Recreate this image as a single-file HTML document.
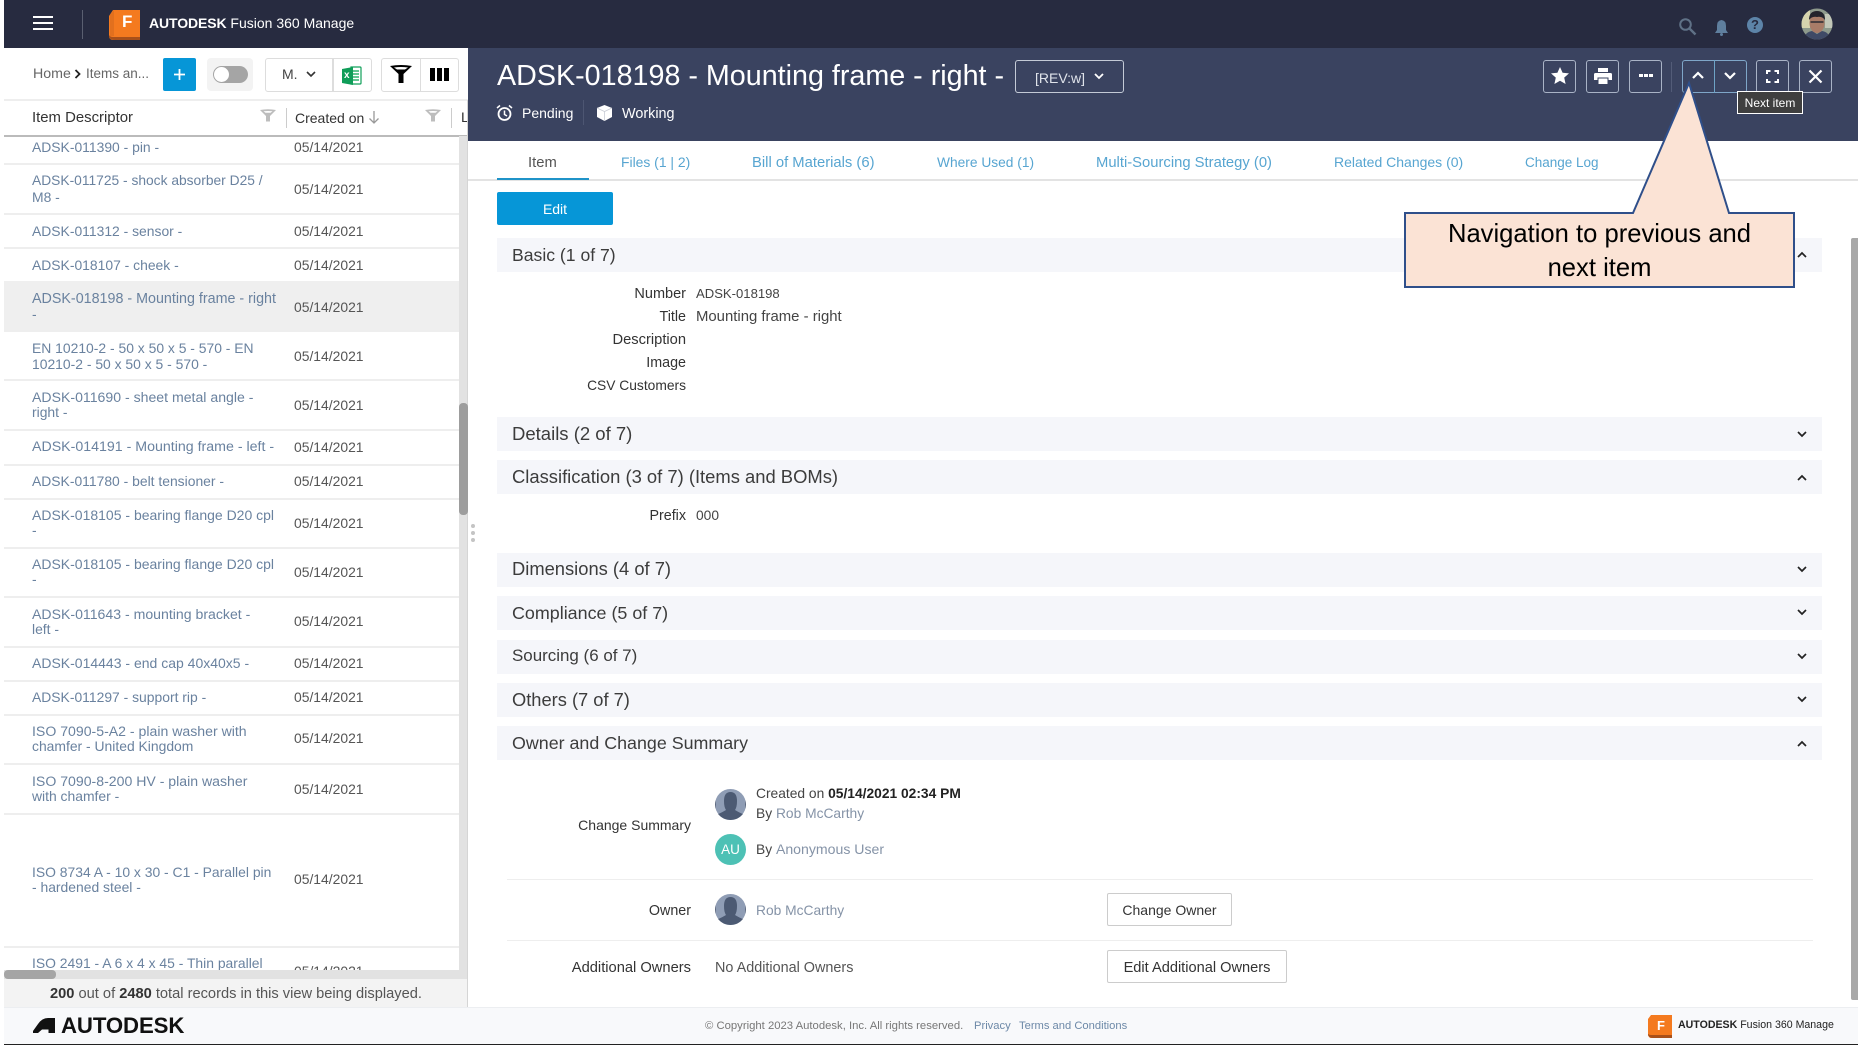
<!DOCTYPE html>
<html><head><meta charset="utf-8"><title>ADSK-018198</title>
<style>
html,body{margin:0;padding:0;background:#fff}
#p{position:relative;width:1858px;height:1045px;overflow:hidden;background:#fff;font-family:"Liberation Sans",sans-serif;font-size:14px;color:#333}
#p div,#p svg{position:absolute}
.t{white-space:nowrap;line-height:16px;height:16px}
.l{left:32px;color:#6a829f;font-size:13.9px}
.d{left:294px;color:#555;font-size:13.9px}
.s{left:4px;width:455px;height:2px;background:#eeeeee}
.h{left:497px;width:1325px;background:#f5f6fa}
.ht{left:512px;font-size:18.4px;line-height:20px;height:20px;color:#3c3c3c;white-space:nowrap}
.tab{top:155px;color:#57a5d1;font-size:14.4px}
.fl{right:1172px;font-size:14.300px;color:#333;text-align:right;margin-top:1px}
.fv{left:696px;font-size:13.8px;color:#444;margin-top:1px}
.ab{top:60px;width:31px;height:31px;border:1px solid #a9b3c6;border-radius:3px}
.lk{color:#8593a7}
</style></head><body><div id="p">

<!-- top bar -->
<div style="left:4px;top:0;width:1854px;height:48px;background:#272b40"></div>
<div style="left:33px;top:16px;width:20px;height:2px;background:#fff"></div>
<div style="left:33px;top:22px;width:20px;height:2px;background:#fff"></div>
<div style="left:33px;top:28px;width:20px;height:2px;background:#fff"></div>
<div style="left:82px;top:10px;width:1px;height:29px;background:#5a5f70"></div>
<svg style="left:109px;top:9px" width="33" height="31" viewBox="0 0 33 31"><path d="M4 1H31V31H4Q1 31 0 28V7Z" fill="#f47a1f"/><path d="M0 26Q1 28 4 28H31V31H6Q1 31 0 28Z" fill="#a8501a"/><path d="M1 6L5 1V27H1Z" fill="#e2701e"/></svg>
<div class="t" style="left:122px;top:14px;color:#fff;font-weight:bold;font-size:17px">F</div>
<div class="t" style="left:149px;top:15px;color:#fff;font-size:14px"><b style="letter-spacing:-.1px">AUTODESK</b> Fusion 360 Manage</div>
<svg style="left:1678px;top:17px" width="19" height="19" viewBox="0 0 19 19"><circle cx="7.5" cy="7.5" r="5.3" fill="none" stroke="#5f7186" stroke-width="2"/><path d="M11.5 11.5L17.5 17.5" stroke="#5f7186" stroke-width="2.4"/></svg>
<svg style="left:1714px;top:19px" width="15" height="17" viewBox="0 0 15 17"><path d="M7.5 1Q12 1.500 12 7V11L14 14H1L3 11V7Q3 1.500 7.500 1Z" fill="#5f7f9e"/><circle cx="7.500" cy="15.500" r="1.500" fill="#5f7f9e"/></svg>
<div style="left:1747px;top:17px;width:16px;height:16px;border-radius:50%;background:#5d84a8;color:#272b40;font-weight:bold;font-size:13px;line-height:16px;text-align:center">?</div>
<svg style="left:1801px;top:8px" width="32" height="32" viewBox="0 0 32 32"><defs><clipPath id="av"><circle cx="16" cy="16" r="15.500"/></clipPath></defs><g clip-path="url(#av)"><rect width="32" height="32" fill="#8e9a8c"/><rect x="0" y="0" width="9" height="20" fill="#d6d4ae"/><rect x="24" y="6" width="8" height="14" fill="#c2c7b8"/><ellipse cx="16" cy="15" rx="7.500" ry="10" fill="#a87c68"/><path d="M8 12Q8 3 16 3Q24 3 24 12Q21 8 16 9Q11 8 8 12Z" fill="#23232c"/><path d="M9.500 14H22.500" stroke="#2b2b33" stroke-width="1.500"/><path d="M2 32Q4 24 11 23L16 26L21 23Q28 24 30 32Z" fill="#3f4a66"/></g></svg>

<!-- item header -->
<div style="left:468px;top:48px;width:1390px;height:93px;background:#3a4360"></div>
<div class="t" style="left:497px;top:60px;color:#fff;font-size:28.700px;line-height:33px;height:33px">ADSK-018198 - Mounting frame - right -</div>
<div style="left:1015px;top:60px;width:107px;height:31px;border:1px solid #c3cad6;border-radius:3px"></div>
<div class="t" style="left:1035px;top:70px;color:#dfe3ea;font-size:14px">[REV:w]</div>
<svg style="left:1093px;top:72px" width="12" height="9" viewBox="0 0 12 9"><path d="M2 2L6 6L10 2" fill="none" stroke="#fff" stroke-width="1.800"/></svg>
<svg style="left:496px;top:104px" width="17" height="18" viewBox="0 0 17 18"><circle cx="8.500" cy="10" r="6" fill="none" stroke="#fff" stroke-width="1.800"/><path d="M8.500 6.500V10.500L11 12M1 4L4 1.500M16 4L13 1.500" fill="none" stroke="#fff" stroke-width="1.500"/></svg>
<div class="t" style="left:522px;top:105px;color:#fff;font-size:14px">Pending</div>
<div style="left:583px;top:100px;width:1px;height:25px;background:#4d5672"></div>
<svg style="left:596px;top:104px" width="17" height="18" viewBox="0 0 17 18"><path d="M8.500 1L16 4V13L8.500 17L1 13V4Z" fill="#fff"/><path d="M1 4L8.500 7.500L16 4M8.500 7.500V17" fill="none" stroke="#c9cdd6" stroke-width=".8"/></svg>
<div class="t" style="left:622px;top:105.500px;color:#fff;font-size:14.400px">Working</div>

<!-- action buttons -->
<div class="ab" style="left:1543px"></div>
<svg style="left:1551px;top:67px" width="18" height="17" viewBox="0 0 18 17"><path d="M9 0L11.600 5.700L18 6.400L13.200 10.600L14.600 17L9 13.700L3.400 17L4.800 10.600L0 6.400L6.400 5.700Z" fill="#fff"/></svg>
<div class="ab" style="left:1586px"></div>
<svg style="left:1594px;top:68px" width="18" height="16" viewBox="0 0 18 16"><path d="M4 0H14V4H4Z" fill="#fff"/><path d="M1.500 5H16.500Q18 5 18 6.500V12H14.500V9.500H3.500V12H0V6.500Q0 5 1.500 5Z" fill="#fff"/><path d="M4.500 10.500H13.500V16H4.500Z" fill="#fff"/></svg>
<div class="ab" style="left:1629px"></div>
<div style="left:1639px;top:74px;width:3.500px;height:3px;background:#fff"></div><div style="left:1644px;top:74px;width:3.500px;height:3px;background:#fff"></div><div style="left:1649px;top:74px;width:3.500px;height:3px;background:#fff"></div>
<div style="left:1671px;top:62px;width:1px;height:30px;background:#535c78"></div>
<div style="left:1682px;top:60px;width:63px;height:31px;border:1px solid #7fa6c8;border-radius:3px"></div>
<div style="left:1714px;top:60px;width:1px;height:33px;background:#6ea3c6"></div>
<svg style="left:1691px;top:70px" width="14" height="10" viewBox="0 0 14 10"><path d="M2 8L7 3L12 8" fill="none" stroke="#fff" stroke-width="2.200"/></svg>
<svg style="left:1723px;top:71px" width="14" height="10" viewBox="0 0 14 10"><path d="M2 2L7 7L12 2" fill="none" stroke="#fff" stroke-width="2.200"/></svg>
<div class="ab" style="left:1756px"></div>
<svg style="left:1766px;top:70px" width="13" height="13" viewBox="0 0 13 13"><path d="M1 4V1H4.500M8.500 1H12V4M12 9V12H8.500M4.500 12H1V9" fill="none" stroke="#fff" stroke-width="2"/></svg>
<div class="ab" style="left:1799px"></div>
<svg style="left:1808px;top:69px" width="15" height="15" viewBox="0 0 15 15"><path d="M1.500 1.500L13.500 13.500M13.500 1.500L1.500 13.500" stroke="#fff" stroke-width="2.200"/></svg>

<!-- tabs -->
<div style="left:468px;top:179px;width:1390px;height:1.500px;background:#e3e3e3"></div>
<div style="left:497px;top:177.500px;width:92px;height:2.500px;background:#1f93c8"></div>
<div class="t tab" style="left:528px;color:#555;font-size:14.800px">Item</div>
<div class="t tab" style="left:621px;font-size:13.900px;top:154px">Files (1 | 2)</div>
<div class="t tab" style="left:752px;font-size:14.800px">Bill of Materials (6)</div>
<div class="t tab" style="left:937px;font-size:13.750px">Where Used (1)</div>
<div class="t tab" style="left:1096px;font-size:14.800px">Multi-Sourcing Strategy (0)</div>
<div class="t tab" style="left:1334px;font-size:14px;top:154px">Related Changes (0)</div>
<div class="t tab" style="left:1525px;font-size:13.500px">Change Log</div>

<div style="left:497px;top:192px;width:116px;height:33px;background:#0696d7;border-radius:2px"></div>
<div class="t" style="left:497px;top:201px;width:116px;text-align:center;color:#fff;font-size:14px">Edit</div>

<!-- sections -->
<div class="h" style="top:238px;height:34px"></div><div class="ht" style="top:245px;font-size:17.600px">Basic (1 of 7)</div>
<div class="h" style="top:417px;height:34px"></div><div class="ht" style="top:424px;font-size:18.500px">Details (2 of 7)</div>
<div class="h" style="top:460px;height:34px"></div><div class="ht" style="top:467px;font-size:18.400px">Classification (3 of 7) (Items and BOMs)</div>
<div class="h" style="top:553px;height:34px"></div><div class="ht" style="top:559px;font-size:18.350px">Dimensions (4 of 7)</div>
<div class="h" style="top:596px;height:34px"></div><div class="ht" style="top:603px;font-size:17.900px">Compliance (5 of 7)</div>
<div class="h" style="top:640px;height:34px"></div><div class="ht" style="top:646px;font-size:16.950px">Sourcing (6 of 7)</div>
<div class="h" style="top:683px;height:34px"></div><div class="ht" style="top:690px;font-size:18.300px">Others (7 of 7)</div>
<div class="h" style="top:726px;height:34px"></div><div class="ht" style="top:733px;font-size:17.850px">Owner and Change Summary</div>
<svg style="left:1796px;top:250px" width="12" height="9" viewBox="0 0 12 9"><path d="M2 7L6 3L10 7" fill="none" stroke="#222" stroke-width="1.700"/></svg>
<svg style="left:1796px;top:430px" width="12" height="9" viewBox="0 0 12 9"><path d="M2 2L6 6L10 2" fill="none" stroke="#222" stroke-width="1.700"/></svg>
<svg style="left:1796px;top:473px" width="12" height="9" viewBox="0 0 12 9"><path d="M2 7L6 3L10 7" fill="none" stroke="#222" stroke-width="1.700"/></svg>
<svg style="left:1796px;top:565px" width="12" height="9" viewBox="0 0 12 9"><path d="M2 2L6 6L10 2" fill="none" stroke="#222" stroke-width="1.700"/></svg>
<svg style="left:1796px;top:608px" width="12" height="9" viewBox="0 0 12 9"><path d="M2 2L6 6L10 2" fill="none" stroke="#222" stroke-width="1.700"/></svg>
<svg style="left:1796px;top:652px" width="12" height="9" viewBox="0 0 12 9"><path d="M2 2L6 6L10 2" fill="none" stroke="#222" stroke-width="1.700"/></svg>
<svg style="left:1796px;top:695px" width="12" height="9" viewBox="0 0 12 9"><path d="M2 2L6 6L10 2" fill="none" stroke="#222" stroke-width="1.700"/></svg>
<svg style="left:1796px;top:739px" width="12" height="9" viewBox="0 0 12 9"><path d="M2 7L6 3L10 7" fill="none" stroke="#222" stroke-width="1.700"/></svg>

<!-- fields -->
<div class="t fl" style="top:285px;font-size:14.500px">Number</div><div class="t fv" style="top:285px;font-size:13.100px">ADSK-018198</div>
<div class="t fl" style="top:308px">Title</div><div class="t fv" style="top:308px;font-size:14.900px">Mounting frame - right</div>
<div class="t fl" style="top:331px;font-size:14.700px">Description</div>
<div class="t fl" style="top:354px">Image</div>
<div class="t fl" style="top:377px;font-size:13.800px">CSV Customers</div>
<div class="t fl" style="top:507px">Prefix</div><div class="t fv" style="top:507px">000</div>

<!-- owner summary -->
<div class="t fl" style="top:816px;right:1167px;font-size:14px">Change Summary</div>
<svg style="left:715px;top:789px" width="31" height="31" viewBox="0 0 31 31"><circle cx="15.500" cy="15.500" r="15.500" fill="#8f9db5"/><path d="M1 11A15.500 15.500 0 0 0 1 20ZM30 11A15.500 15.500 0 0 1 30 20Z" fill="#465268"/><path d="M15.500 3Q22 3 22 12Q22 18 20 21Q25 24 28 25Q23 31 15.500 31Q8 31 3 25Q6 24 11 21Q9 18 9 12Q9 3 15.500 3Z" fill="#4c5a73"/></svg>
<div class="t" style="left:756px;top:786px;font-size:13.800px;color:#444">Created on <b style="color:#222">05/14/2021 02:34 PM</b></div>
<div class="t" style="left:756px;top:806px;font-size:13.800px;color:#444">By <span class="lk">Rob McCarthy</span></div>
<div style="left:715px;top:834px;width:31px;height:31px;border-radius:50%;background:#4dc1b5;color:#fff;font-size:13.500px;line-height:31px;text-align:center">AU</div>
<div class="t" style="left:756px;top:841px;font-size:13.800px;color:#444">By <span class="lk" style="font-size:14.100px">Anonymous User</span></div>
<div style="left:507px;top:879px;width:1306px;height:1px;background:#eee"></div>
<div class="t fl" style="top:902px;right:1167px">Owner</div>
<svg style="left:715px;top:894px" width="31" height="31" viewBox="0 0 31 31"><circle cx="15.500" cy="15.500" r="15.500" fill="#8f9db5"/><path d="M1 11A15.500 15.500 0 0 0 1 20ZM30 11A15.500 15.500 0 0 1 30 20Z" fill="#465268"/><path d="M15.500 3Q22 3 22 12Q22 18 20 21Q25 24 28 25Q23 31 15.500 31Q8 31 3 25Q6 24 11 21Q9 18 9 12Q9 3 15.500 3Z" fill="#4c5a73"/></svg>
<div class="t lk" style="left:756px;top:903px;font-size:13.800px">Rob McCarthy</div>
<div style="left:1107px;top:893px;width:123px;height:31px;border:1px solid #ccc;border-radius:2px"></div>
<div class="t" style="left:1107px;top:902px;width:125px;text-align:center;font-size:14px;color:#333">Change Owner</div>
<div style="left:507px;top:940px;width:1306px;height:1px;background:#eee"></div>
<div class="t fl" style="top:959px;right:1167px;font-size:14.700px">Additional Owners</div>
<div class="t" style="left:715px;top:960px;font-size:14.400px;color:#555">No Additional Owners</div>
<div style="left:1107px;top:950px;width:178px;height:31px;border:1px solid #ccc;border-radius:2px"></div>
<div class="t" style="left:1107px;top:960px;width:180px;text-align:center;font-size:14.600px;color:#333">Edit Additional Owners</div>

<!-- right scrollbar -->
<div style="left:1851px;top:238px;width:7px;height:762px;background:#a8a8a8;border-radius:2px 0 0 2px"></div>

<!-- left toolbar -->
<div class="t" style="left:33px;top:66px;font-size:14.200px;color:#666">Home</div>
<svg style="left:74px;top:69px" width="7" height="10" viewBox="0 0 7 10"><path d="M1.500 1L5.500 5L1.500 9" fill="none" stroke="#222" stroke-width="1.800"/></svg>
<div class="t" style="left:86px;top:66px;font-size:13.500px;color:#666">Items an...</div>
<div style="left:163px;top:58px;width:33px;height:33px;background:#0696d7;border-radius:2px"></div>
<svg style="left:173px;top:68px" width="13" height="13" viewBox="0 0 13 13"><path d="M6.500 1V12M1 6.500H12" stroke="#fff" stroke-width="1.800"/></svg>
<div style="left:207px;top:58px;width:46px;height:33px;background:#f3f3f3;border-radius:4px"></div>
<div style="left:213px;top:66px;width:35px;height:17px;background:#a5a5a5;border-radius:9px"></div>
<div style="left:214px;top:67px;width:15px;height:15px;background:#fff;border-radius:50%"></div>
<div style="left:265px;top:58px;width:66px;height:32px;border:1px solid #ddd;border-radius:3px 0 0 3px"></div>
<div class="t" style="left:282px;top:66px;font-size:14px;color:#444">M.</div>
<svg style="left:305px;top:70px" width="12" height="9" viewBox="0 0 12 9"><path d="M2 2L6 6L10 2" fill="none" stroke="#333" stroke-width="1.600"/></svg>
<div style="left:333px;top:58px;width:37px;height:32px;border:1px solid #ddd;border-radius:0 3px 3px 0"></div>
<svg style="left:342px;top:66px" width="20" height="20" viewBox="0 0 20 20"><path d="M9 1H18Q19 1 19 2V17Q19 18 18 18H9Z" fill="#fff" stroke="#12a05b" stroke-width="1.200"/><path d="M11 5H17M11 8H17M11 11H17M11 14H17" stroke="#2fb36f" stroke-width="1.500"/><path d="M0 3L11 1V19L0 17Z" fill="#0f9d58"/></svg>
<div class="t" style="left:344px;top:68px;color:#fff;font-size:10px;font-weight:bold">x</div>
<div style="left:381px;top:58px;width:76px;height:32px;border:1px solid #ddd;border-radius:3px"></div>
<div style="left:420px;top:58px;width:1px;height:33px;background:#ddd"></div>
<svg style="left:390px;top:65px" width="22" height="18" viewBox="0 0 22 18"><path d="M0 1Q11 -1 22 1L13.500 9V18H8.500V9Z" fill="#000"/><path d="M4 2.500Q11 1.500 18 2.500L15 4.500H7Z" fill="#fff"/></svg>
<div style="left:430px;top:68px;width:5px;height:13px;background:#000"></div><div style="left:437px;top:68px;width:5px;height:13px;background:#000"></div><div style="left:444px;top:68px;width:5px;height:13px;background:#000"></div>
<div style="left:4px;top:99px;width:464px;height:2px;background:#eeeeee"></div>

<!-- list header -->
<div class="t" style="left:32px;top:110px;font-size:14.900px;color:#333">Item Descriptor</div>
<svg style="left:259px;top:109px" width="18" height="14" viewBox="0 0 18 14"><path d="M1 1Q9 -.5 17 1L11 7V12.500H7V7Z" fill="#bdbdbd"/><path d="M4.500 2.300Q9 1.700 13.500 2.300L11.500 3.800H6.500Z" fill="#fff"/></svg>
<div style="left:286px;top:108px;width:1px;height:20px;background:#ccc"></div>
<div class="t" style="left:295px;top:110px;font-size:14px;color:#333">Created on</div>
<svg style="left:368px;top:110px" width="12" height="15" viewBox="0 0 12 15"><path d="M6 1V13M1.500 8.500L6 13L10.500 8.500" fill="none" stroke="#999" stroke-width="1.300"/></svg>
<svg style="left:424px;top:109px" width="18" height="14" viewBox="0 0 18 14"><path d="M1 1Q9 -.5 17 1L11 7V12.500H7V7Z" fill="#bdbdbd"/><path d="M4.500 2.300Q9 1.700 13.500 2.300L11.500 3.800H6.500Z" fill="#fff"/></svg>
<div style="left:451px;top:108px;width:1px;height:20px;background:#ccc"></div>
<div class="t" style="left:461px;top:110px;font-size:14.200px;color:#333">L</div>
<div style="left:4px;top:135px;width:463px;height:1.500px;background:#bbb"></div>

<!-- list -->
<div style="left:0;top:136px;width:459px;height:834px;overflow:hidden">
<div class="s" style="top:27px"></div>
<div class="s" style="top:77px"></div>
<div class="s" style="top:111px"></div>
<div style="left:4px;top:145px;width:455px;height:50px;background:#efefef"></div>
<div class="s" style="top:194px"></div>
<div class="s" style="top:243px"></div>
<div class="s" style="top:293px"></div>
<div class="s" style="top:328px"></div>
<div class="s" style="top:362px"></div>
<div class="s" style="top:411px"></div>
<div class="s" style="top:460px"></div>
<div class="s" style="top:510px"></div>
<div class="s" style="top:544px"></div>
<div class="s" style="top:578px"></div>
<div class="s" style="top:627px"></div>
<div class="s" style="top:677px"></div>
<div class="s" style="top:810px"></div>

<div class="t l" style="top:3px">ADSK-011390 - pin -</div><div class="t d" style="top:3px">05/14/2021</div>
<div class="t l" style="top:37px;font-size:13.800px">ADSK-011725 - shock absorber D25 /</div><div class="t l" style="top:53px">M8 -</div><div class="t d" style="top:45px">05/14/2021</div>
<div class="t l" style="top:87px">ADSK-011312 - sensor -</div><div class="t d" style="top:87px">05/14/2021</div>
<div class="t l" style="top:121px">ADSK-018107 - cheek -</div><div class="t d" style="top:121px">05/14/2021</div>
<div class="t l" style="top:155px;font-size:14.300px">ADSK-018198 - Mounting frame - right</div><div class="t l" style="top:170px">-</div><div class="t d" style="top:163px">05/14/2021</div>
<div class="t l" style="top:204px">EN 10210-2 - 50 x 50 x 5 - 570 - EN</div><div class="t l" style="top:220px">10210-2 - 50 x 50 x 5 - 570 -</div><div class="t d" style="top:212px">05/14/2021</div>
<div class="t l" style="top:253px;font-size:14.100px">ADSK-011690 - sheet metal angle -</div><div class="t l" style="top:268px">right -</div><div class="t d" style="top:261px">05/14/2021</div>
<div class="t l" style="top:303px;font-size:14.200px">ADSK-014191 - Mounting frame - left -</div><div class="t d" style="top:303px">05/14/2021</div>
<div class="t l" style="top:337px">ADSK-011780 - belt tensioner -</div><div class="t d" style="top:337px">05/14/2021</div>
<div class="t l" style="top:371px;font-size:14px">ADSK-018105 - bearing flange D20 cpl</div><div class="t l" style="top:386px">-</div><div class="t d" style="top:379px">05/14/2021</div>
<div class="t l" style="top:420px;font-size:14px">ADSK-018105 - bearing flange D20 cpl</div><div class="t l" style="top:435px">-</div><div class="t d" style="top:428px">05/14/2021</div>
<div class="t l" style="top:470px;font-size:14.100px">ADSK-011643 - mounting bracket -</div><div class="t l" style="top:485px">left -</div><div class="t d" style="top:477px">05/14/2021</div>
<div class="t l" style="top:519px;font-size:14px">ADSK-014443 - end cap 40x40x5 -</div><div class="t d" style="top:519px">05/14/2021</div>
<div class="t l" style="top:553px">ADSK-011297 - support rip -</div><div class="t d" style="top:553px">05/14/2021</div>
<div class="t l" style="top:587px;font-size:14.100px">ISO 7090-5-A2 - plain washer with</div><div class="t l" style="top:602px">chamfer - United Kingdom</div><div class="t d" style="top:594px">05/14/2021</div>
<div class="t l" style="top:637px;font-size:14.100px">ISO 7090-8-200 HV - plain washer</div><div class="t l" style="top:652px">with chamfer -</div><div class="t d" style="top:645px">05/14/2021</div>
<div class="t l" style="top:728px">ISO 8734 A - 10 x 30 - C1 - Parallel pin</div><div class="t l" style="top:743px">- hardened steel -</div><div class="t d" style="top:735px">05/14/2021</div>
<div class="t l" style="top:819px">ISO 2491 - A 6 x 4 x 45 - Thin parallel</div><div class="t d" style="top:827px">05/14/2021</div>
</div>

<!-- list scrollbars -->
<div style="left:459px;top:136px;width:8px;height:844px;background:#e2e2e2"></div>
<div style="left:467px;top:100px;width:1px;height:907px;background:#d5d5d5"></div>
<div style="left:459px;top:403px;width:9px;height:112px;background:#9d9d9d;border-radius:4px"></div>
<div style="left:4px;top:970px;width:455px;height:9px;background:#e2e2e2"></div>
<div style="left:4px;top:970px;width:52px;height:9px;background:#a5a5a5;border-radius:4px"></div>
<div style="left:4px;top:979px;width:463px;height:28px;background:#f3f3f3"></div>
<div class="t" style="left:50px;top:986px;font-size:14.650px;color:#555"><b style="color:#333">200</b> out of <b style="color:#333">2480</b> total records in this view being displayed.</div>
<div style="left:471px;top:524px;width:4px;height:4px;border-radius:50%;background:#c4c4c4"></div>
<div style="left:471px;top:531px;width:4px;height:4px;border-radius:50%;background:#c4c4c4"></div>
<div style="left:471px;top:538px;width:4px;height:4px;border-radius:50%;background:#c4c4c4"></div>

<!-- footer -->
<div style="left:4px;top:1007px;width:1854px;height:37px;background:#f8f9fb;border-top:1px solid #eceef1;box-sizing:border-box"></div>
<div style="left:4px;top:1044px;width:1854px;height:1px;background:#222"></div>
<svg style="left:33px;top:1018px" width="22" height="15" viewBox="0 0 22 15"><path d="M0 13L5 6Q9 0 15 0H22V15H15.500V11.500H9L5 15H0Z" fill="#111"/><path d="M10 8.500H15.500V4.500Q12 5 10 8.500Z" fill="#111"/></svg>
<div class="t" style="left:61px;top:1016px;font-size:22.200px;font-weight:bold;color:#111;line-height:20px;height:20px;letter-spacing:-.1px">AUTODESK</div>
<div class="t" style="left:705px;top:1018px;font-size:11.300px;color:#777">© Copyright 2023 Autodesk, Inc. All rights reserved.</div>
<div class="t" style="left:974px;top:1018px;font-size:11.200px;color:#6d89a8">Privacy</div>
<div class="t" style="left:1019px;top:1018px;font-size:11.200px;color:#6d89a8">Terms and Conditions</div>
<svg style="left:1648px;top:1014px" width="25" height="24" viewBox="0 0 25 24"><path d="M3 1H24V24H3Q1 24 0 21V5Z" fill="#f47a1f"/><path d="M0 20Q1 21 3 21H24V24H5Q1 24 0 21Z" fill="#a8501a"/></svg>
<div class="t" style="left:1657px;top:1018px;color:#fff;font-weight:bold;font-size:13px">F</div>
<div class="t" style="left:1678px;top:1017px;font-size:10.600px;color:#222"><b>AUTODESK</b> Fusion 360 Manage</div>

<!-- callout -->
<svg style="left:1400px;top:80px" width="400" height="212" viewBox="0 0 400 212"><path d="M5 133H233L289 3L329 133H394V207H5Z" fill="#fbe3d5" stroke="#2f4f8a" stroke-width="2"/></svg>
<div class="t" style="left:1404px;top:219px;width:391px;text-align:center;font-size:25.600px;line-height:30px;height:30px;color:#000">Navigation to previous and</div>
<div class="t" style="left:1404px;top:253px;width:391px;text-align:center;font-size:25.600px;line-height:30px;height:30px;color:#000">next item</div>

<!-- tooltip -->
<div style="left:1737px;top:91px;width:64px;height:21px;background:#3f3f3f;border:1px solid #fff"></div>
<div class="t" style="left:1737px;top:95px;width:66px;text-align:center;color:#fff;font-size:12px">Next item</div>

</div></body></html>
